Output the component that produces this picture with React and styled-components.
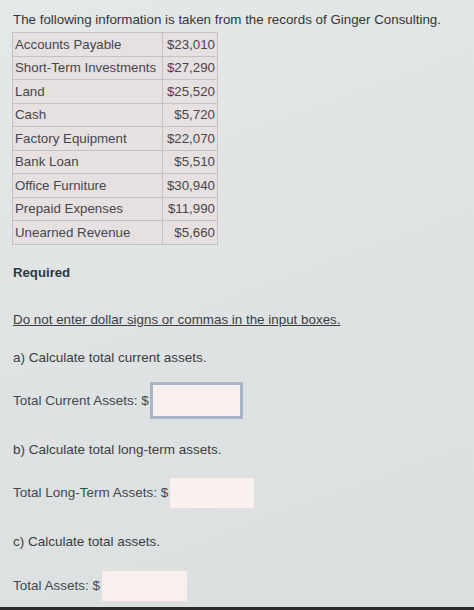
import React from "react";
import styled, { createGlobalStyle } from "styled-components";

const Global = createGlobalStyle`
  html, body { margin: 0; padding: 0; }
  body {
    background: #dfe3e3;
    font-family: "Liberation Sans", Arial, sans-serif;
    color: #3b3e44;
    width: 474px;
    height: 610px;
    overflow: hidden;
  }
`;

const Page = styled.div`
  position: relative;
  width: 474px;
  height: 610px;
  box-sizing: border-box;
  padding: 12px 0 0 13px;
  background: linear-gradient(160deg, #e4e8e8 0%, #dee2e2 55%, #dadfe0 100%);
  display: flex;
  flex-direction: column;
  align-items: flex-start;
`;

const Title = styled.p`
  margin: 0 0 4px 0;
  font-size: 13.35px;
  line-height: 16px;
  color: #33363b;
  white-space: nowrap;
`;

const Table = styled.table`
  border-collapse: collapse;
  margin-left: -1px;
  border: 1.5px solid #8d8c90;
  font-size: 13.3px;
  color: #45474d;
  table-layout: fixed;
`;

const Cell = styled.td`
  box-sizing: border-box;
  background: #e6e0e1;
  border: 1px solid #c7c1c4;
  height: 23.5px;
  padding: 0 2px 0 2px;
  white-space: nowrap;
  text-align: ${(p) => (p.$num ? "right" : "left")};
  width: ${(p) => (p.$num ? "55px" : "150px")};
`;

const Heading = styled.h3`
  margin: 20px 0 0 0;
  font-size: 13.2px;
  line-height: 16px;
  font-weight: bold;
  color: #34373c;
`;

const Note = styled.p`
  margin: 31px 0 0 0;
  font-size: 13.4px;
  line-height: 16px;
  text-decoration: underline;
  color: #3a3d42;
  white-space: nowrap;
`;

const Question = styled.p`
  margin: ${(p) => p.$mt}px 0 0 0;
  font-size: 13.5px;
  line-height: 16px;
  color: #3a3d42;
`;

const AnswerRow = styled.label`
  display: flex;
  align-items: center;
  margin-top: ${(p) => p.$mt}px;
  font-size: 13.5px;
  color: #45484e;
`;

const Box = styled.input`
  box-sizing: border-box;
  width: ${(p) => p.$w}px;
  height: ${(p) => p.$h}px;
  margin-left: 1px;
  background: #f8efef;
  border: ${(p) => (p.$focus ? "3px solid #aab4c4" : "1px solid #e6dcdc")};
  outline: none;
  padding: 0;
`;

const BottomStrip = styled.div`
  position: absolute;
  left: 0;
  right: 0;
  bottom: 0;
  height: 3px;
  background: #2c2a28;
`;

const rows = [
  ["Accounts Payable", "$23,010"],
  ["Short-Term Investments", "$27,290"],
  ["Land", "$25,520"],
  ["Cash", "$5,720"],
  ["Factory Equipment", "$22,070"],
  ["Bank Loan", "$5,510"],
  ["Office Furniture", "$30,940"],
  ["Prepaid Expenses", "$11,990"],
  ["Unearned Revenue", "$5,660"],
];

export default function App() {
  return (
    <>
      <Global />
      <Page>
        <Title>The following information is taken from the records of Ginger Consulting.</Title>
        <Table>
          <tbody>
            {rows.map(([k, v]) => (
              <tr key={k}>
                <Cell>{k}</Cell>
                <Cell $num>{v}</Cell>
              </tr>
            ))}
          </tbody>
        </Table>
        <Heading>Required</Heading>
        <Note>Do not enter dollar signs or commas in the input boxes.</Note>
        <Question $mt={22}>a) Calculate total current assets.</Question>
        <AnswerRow $mt={16}>
          Total Current Assets: $
          <Box $w={93} $h={37} $focus />
        </AnswerRow>
        <Question $mt={23}>b) Calculate total long-term assets.</Question>
        <AnswerRow $mt={19}>
          Total Long-Term Assets: $
          <Box $w={86} $h={32} />
        </AnswerRow>
        <Question $mt={25}>c) Calculate total assets.</Question>
        <AnswerRow $mt={20}>
          Total Assets: $
          <Box $w={87} $h={32} />
        </AnswerRow>
        <BottomStrip />
      </Page>
    </>
  );
}
